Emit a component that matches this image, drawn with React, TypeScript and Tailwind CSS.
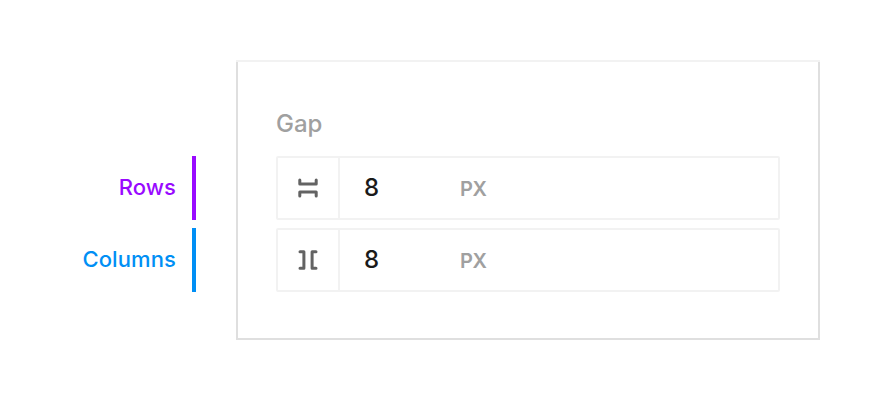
type RowProps = { label: string; tone: string };

function GapIcon({ vertical }: { vertical?: boolean }) {
  return (
    <svg
      width="24"
      height="24"
      viewBox="0 0 24 24"
      fill="none"
      stroke="#636363"
      strokeWidth="3"
      strokeLinecap="round"
      strokeLinejoin="round"
    >
      <g transform={vertical ? "rotate(90 12 12)" : undefined}>
        <path d="M3.8 4V7.9H20.2V4M3.8 20V16.1H20.2V20" />
      </g>
    </svg>
  );
}

function Label({ label, tone }: RowProps) {
  return (
    <div className={`flex h-16 items-center justify-end border-r-4 pr-4 pb-0.5 text-[22px] font-medium tracking-[0.1px] ${tone}`}>
      {label}
    </div>
  );
}

function Field({ vertical }: { vertical?: boolean }) {
  return (
    <div className="flex h-16 rounded-[2px] border-2 border-[#f2f2f2] bg-white">
      <div className="flex w-[62px] items-center justify-center border-r-2 border-[#f2f2f2]">
        <GapIcon vertical={vertical} />
      </div>
      <div className="flex w-[120px] items-center pl-6 text-2xl font-medium text-[#1a1a1a]">8</div>
      <div className="flex items-center pt-0.5 text-xl font-semibold tracking-[-0.3px] text-[#a0a0a0]">PX</div>
    </div>
  );
}

export default function App() {
  return (
    <main className="flex h-[400px] w-[880px] bg-white pt-[60px] font-['Inter',sans-serif] antialiased">
      <div className="mr-10 flex w-[196px] flex-col gap-2 pt-24">
        <Label label="Rows" tone="border-[#990aff] text-[#990aff]" />
        <Label label="Columns" tone="border-[#008ff5] text-[#008ff5]" />
      </div>
      <section className="h-[280px] w-[584px] border-t-2 border-t-[#f2f2f2]">
        <div className="h-full border-x-2 border-b-2 border-[#dfdfdf] px-[38px] pt-[46px]">
          <h2 className="mb-4 h-8 text-2xl leading-8 font-medium text-[#a0a0a0]">Gap</h2>
          <div className="flex flex-col gap-2">
            <Field />
            <Field vertical />
          </div>
        </div>
      </section>
    </main>
  );
}
